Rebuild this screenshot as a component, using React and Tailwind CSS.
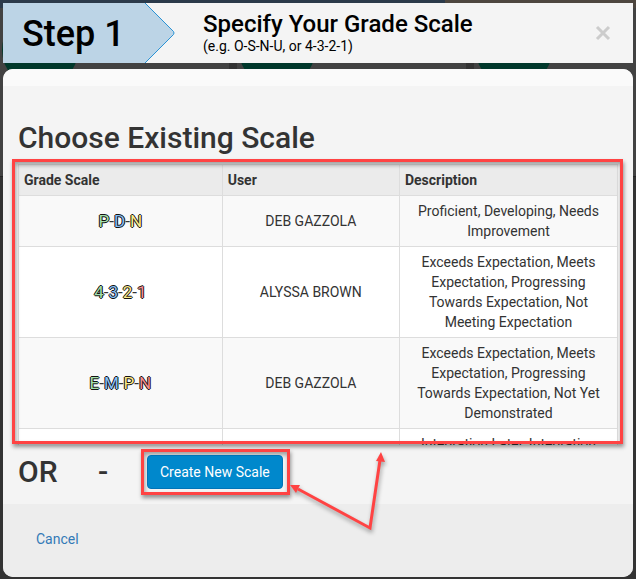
import { Fragment } from 'react'

const OUTLINE = '[text-shadow:-1px_0_#111,1px_0_#111,0_-1px_#111,0_1px_#111]'

const COLORS = ['text-[#a3dfac]', 'text-[#86bff5]', 'text-[#fdea8a]', 'text-[#f58c8c]']

const SCALES = [
  { marks: ['P', 'D', 'N'], user: 'DEB GAZZOLA', description: 'Proficient, Developing, Needs Improvement' },
  {
    marks: ['4', '3', '2', '1'],
    user: 'ALYSSA BROWN',
    description: 'Exceeds Expectation, Meets Expectation, Progressing Towards Expectation, Not Meeting Expectation',
  },
  {
    marks: ['E', 'M', 'P', 'N'],
    user: 'DEB GAZZOLA',
    description: 'Exceeds Expectation, Meets Expectation, Progressing Towards Expectation, Not Yet Demonstrated',
  },
  { marks: [], user: '', description: 'Integration Later, Integration' },
]

function Marks({ marks }) {
  return (
    <span>
      {marks.map((m, i) => (
        <Fragment key={m}>
          {i > 0 && '-'}
          <span className={`${COLORS[i]} ${OUTLINE}`}>{m}</span>
        </Fragment>
      ))}
    </span>
  )
}

// dimmed page behind the dialog
function Backdrop() {
  return (
    <div className="absolute inset-0 overflow-hidden bg-[#333333]" aria-hidden="true">
      <div className="flex h-2">
        <div className="w-[70%] bg-[#2b3a4a]" />
        <div className="flex-1 bg-[#4d463f]" />
      </div>
      <div className="flex h-[169px] bg-[#3a3a3a] border-b border-[#252525]">
        {[0, 1, 2].map(i => (
          <div key={i} className="w-[237px] shrink-0 border-r-8 border-[#333333] bg-[#424242] pt-1">
            <div className="ml-[2px] size-[76px] rounded-full bg-[#00382b]" />
          </div>
        ))}
      </div>
    </div>
  )
}

function Header() {
  return (
    <header className="relative flex h-[60px] items-center bg-[#f4f4f4] text-black">
      <div className="relative h-full w-[200px] shrink-0">
        <svg className="absolute inset-y-0 left-0" width="174" height="60" viewBox="0 0 174 60">
          <path d="M0 0H142L170.500 28.500Q171.500 30 170.500 31.500L142 60H0Z" fill="#bcd4e6" />
          <path d="M142 0L170.500 28.500Q171.500 30 170.500 31.500L142 60" fill="none" stroke="#2a93d5" />
        </svg>
        <h1 className="relative pl-[19px] text-4xl leading-[62px] font-medium">Step 1</h1>
      </div>
      <div className="flex-1 pb-[3px]">
        <h2 className="text-2xl leading-7 font-medium">Specify Your Grade Scale</h2>
        <p className="text-sm leading-4">(e.g. O-S-N-U, or 4-3-2-1)</p>
      </div>
      <button type="button" aria-label="Close" className="mr-[22px] text-[#cccccc]">
        <svg width="16" height="16" viewBox="0 0 16 16" stroke="currentColor" strokeWidth="3">
          <path d="M2 2L14 14M14 2L2 14" />
        </svg>
      </button>
    </header>
  )
}

function ScaleTable() {
  return (
    <div className="relative">
      <div className="h-[281px] overflow-hidden">
        <table className="w-full table-fixed border-collapse bg-white text-sm leading-5">
          <thead>
            <tr className="bg-[#ebebeb] text-left">
              <th className="w-[34%] border border-[#dddddd] p-[5px] font-bold">Grade Scale</th>
              <th className="w-[29.6%] border border-[#dddddd] p-[5px] font-bold">User</th>
              <th className="border border-[#dddddd] p-[5px] font-bold">Description</th>
            </tr>
          </thead>
          <tbody>
            {SCALES.map((s, i) => (
              <tr key={i} className="text-center odd:bg-[#f9f9f9]">
                <td className="border border-[#dddddd] p-[5px] text-[17px]"><Marks marks={s.marks} /></td>
                <td className="border border-[#dddddd] p-[5px]">{s.user}</td>
                <td className="border border-[#dddddd] p-[5px]">{s.description}</td>
              </tr>
            ))}
          </tbody>
        </table>
      </div>
      <div className="pointer-events-none absolute -top-[5px] -right-[5px] bottom-[1px] -left-[6px] border-3 border-[#ff4343] shadow-[1px_3px_4px_rgba(0,0,0,0.4),inset_1px_3px_4px_rgba(0,0,0,0.35)]" />
    </div>
  )
}

function Arrows() {
  return (
    <svg
      className="pointer-events-none absolute top-0 left-full [filter:drop-shadow(1px_3px_2px_rgba(0,0,0,0.35))]"
      width="104" height="84" viewBox="0 0 104 84" fill="#ff4343"
    >
      <path d="M11 37L83 76L93 8" fill="none" stroke="#ff4343" strokeWidth="3" />
      <path d="M3 33L13 33L9 41Z" />
      <path d="M94 0L89 9L98 10Z" />
    </svg>
  )
}

export default function App() {
  return (
    <div className="relative min-h-screen font-[Roboto,sans-serif] text-[#333333]">
      <Backdrop />
      <div className="relative p-[3px] pb-[2px]">
        <Header />
        <main className="mt-[6px] overflow-hidden rounded-[10px] bg-[#f4f4f4]">
          <div className="h-[17px] bg-[#fafafa]" />
          <section className="px-[15px] pt-9">
            <h2 className="mb-[10px] text-3xl leading-8 font-medium">Choose Existing Scale</h2>
            <ScaleTable />
            <div className="flex h-[59px] items-start pt-1 text-3xl font-medium">
              <span className="w-20 leading-[45px]">OR</span>
              <span className="w-[43px] leading-[45px]">-</span>
              <div className="relative border-3 border-[#ff4343] p-[3px] pr-1 shadow-[1px_3px_4px_rgba(0,0,0,0.4),inset_1px_3px_4px_rgba(0,0,0,0.35)]">
                <button type="button" className="block rounded-sm border border-[#0074b8] bg-[#0088cc] px-3 py-[6px] text-sm leading-5 font-normal whitespace-nowrap text-white">
                  Create New Scale
                </button>
                <Arrows />
              </div>
            </div>
          </section>
          <footer className="bg-[#ededed] px-[33px] pt-[25px] pb-7 text-sm leading-5">
            <a href="#cancel" className="text-[#337ab7]">Cancel</a>
          </footer>
        </main>
      </div>
    </div>
  )
}
